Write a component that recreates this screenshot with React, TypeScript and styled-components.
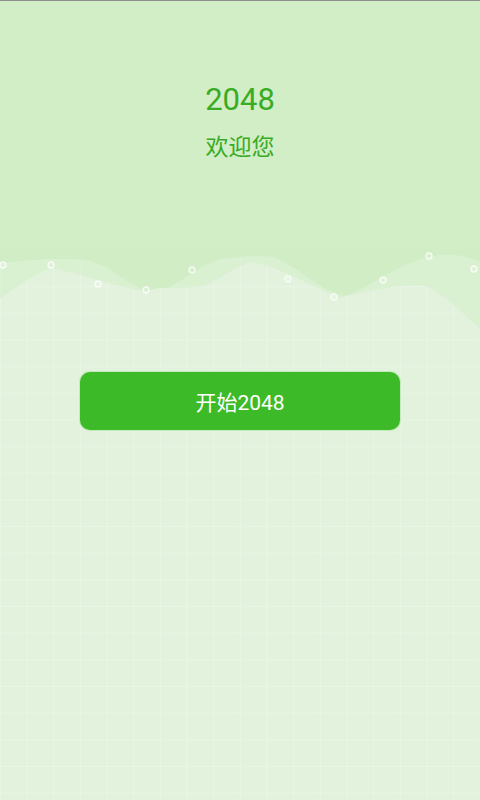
import styled, { createGlobalStyle } from 'styled-components'

const GRID = 480 / 18

const GlobalStyle = createGlobalStyle`
  html, body {
    margin: 0;
    padding: 0;
  }
  body {
    font-family: Roboto, "Noto Sans CJK SC", sans-serif;
    background: #e3f3de;
  }
`

const Page = styled.div`
  min-height: 100vh;
  display: flex;
  flex-direction: column;
  border-top: 1px solid #8c8f8a;
  box-sizing: border-box;
  background-color: #e2f2dd;
  background-image: linear-gradient(
      to right,
      rgba(255, 255, 255, 0.22) 1px,
      transparent 1px
    ),
    linear-gradient(to bottom, rgba(255, 255, 255, 0.22) 1px, transparent 1px);
  background-size: ${GRID}px ${GRID}px;
  background-position: 0 ${312 - 12 * GRID}px;
`

const Hero = styled.header`
  display: flex;
  flex-direction: column;
`

const HeroTop = styled.div`
  height: 249px;
  background: #d1eec6;
  display: flex;
  flex-direction: column;
  align-items: center;
  padding-top: 81px;
  box-sizing: border-box;
`

const Title = styled.h1`
  margin: 0;
  font-size: 31px;
  line-height: 36px;
  font-weight: 400;
  color: #3aab25;
`

const Subtitle = styled.h2`
  margin: 15px 0 0;
  font-size: 23px;
  line-height: 30px;
  font-weight: 400;
  color: #3aab25;
`

const WaveSvg = styled.svg`
  display: block;
  width: 100%;
  height: 80px;
`

const Actions = styled.main`
  display: flex;
  justify-content: center;
  padding-top: 41px;
`

const StartButton = styled.button`
  width: 322px;
  height: 60px;
  border-radius: 11px;
  border: 1px solid rgba(255, 255, 255, 0.7);
  background: #3dba27;
  color: #ffffff;
  font-family: Roboto, "Noto Sans CJK SC", sans-serif;
  font-size: 21px;
  cursor: pointer;
`

// curves in svg coords (svg starts at page y = 250)
const frontCurve =
  'M0 48 C20 36 38 20 53 18 C72 22 95 30 145 42 C152 40 156 38 160 38 C180 38 195 38 205 35 C222 28 238 14 252 12 C275 16 300 30 340 48 C346 46 350 44 356 44 C372 40 390 36 420 35 C440 38 458 60 480 78'

const midCurve =
  'M0 13 C30 10 60 8 85 10 C110 14 128 36 150 42 C170 44 190 20 215 11 C235 6 262 5 275 8 C300 18 318 40 345 46 C365 42 395 12 440 5 C460 4 472 8 480 12'

const dots: [number, number][] = [
  [3, 15],
  [51, 15],
  [98, 34],
  [146, 40],
  [192, 20],
  [288, 29],
  [334, 47],
  [383, 30],
  [429, 6],
  [474, 19],
]

const Waves = () => (
  <WaveSvg viewBox="0 0 480 80" preserveAspectRatio="none">
    <defs>
      <clipPath id="above-front">
        <path d={`${frontCurve} L480 0 L0 0 Z`} />
      </clipPath>
    </defs>
    <g clipPath="url(#above-front)">
      <path d={`${midCurve} L480 80 L0 80 Z`} fill="rgba(208, 237, 197, 0.5)" />
      <path d={`${midCurve} L480 0 L0 0 Z`} fill="#d0edc5" />
    </g>
    {dots.map(([cx, cy]) => (
      <circle
        key={cx}
        cx={cx}
        cy={cy}
        r={3}
        fill="rgba(255, 255, 255, 0.2)"
        stroke="rgba(255, 255, 255, 0.75)"
        strokeWidth={1.4}
      />
    ))}
  </WaveSvg>
)

const App = () => {
  return (
    <Page>
      <GlobalStyle />
      <Hero>
        <HeroTop>
          <Title>2048</Title>
          <Subtitle>欢迎您</Subtitle>
        </HeroTop>
        <Waves />
      </Hero>
      <Actions>
        <StartButton>开始2048</StartButton>
      </Actions>
    </Page>
  )
}

export default App
